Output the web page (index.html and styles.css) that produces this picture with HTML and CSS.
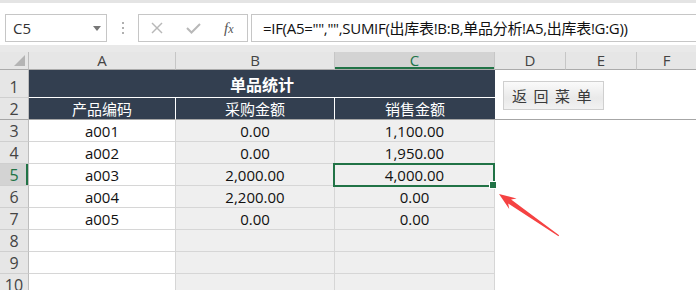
FILE: index.html
```html
<!DOCTYPE html>
<html lang="zh-CN">
<head>
    <meta charset="UTF-8">
    <title>单品统计</title>
    <link rel="stylesheet" href="styles.css">
</head>
<body>
<div class="app">
    <div class="formula-bar">
        <div class="name-box">
            <span>C5</span>
            <span class="caret"></span>
        </div>
        <div class="grip"><i></i><i></i><i></i></div>
        <div class="fx-buttons">
            <svg class="btn-cancel" viewBox="0 0 12 12" fill="none" stroke="#b8b8b8" stroke-width="1.4">
                <line x1="1" y1="1" x2="11" y2="11"></line>
                <line x1="11" y1="1" x2="1" y2="11"></line>
            </svg>
            <svg class="btn-enter" viewBox="0 0 15 11" fill="none" stroke="#b8b8b8" stroke-width="2">
                <polyline points="1,5 5.5,9.5 14,1"></polyline>
            </svg>
            <span class="btn-fx">f<small>x</small></span>
        </div>
        <div class="formula-input">=IF(A5="","",SUMIF(出库表!B:B,单品分析!A5,出库表!G:G))</div>
    </div>

    <div class="sheet">
        <div class="grid">
            <!-- column headers -->
            <div class="corner"><span class="tri"></span></div>
            <div class="ch">A</div>
            <div class="ch">B</div>
            <div class="ch active">C</div>
            <div class="ch">D</div>
            <div class="ch">E</div>
            <div class="ch last">F</div>

            <!-- row 1 -->
            <div class="rh">1</div>
            <div class="title">单品统计</div>
            <div class="blank span3"></div>

            <!-- row 2 -->
            <div class="rh thick">2</div>
            <div class="head">产品编码</div>
            <div class="head">采购金额</div>
            <div class="head end">销售金额</div>
            <div class="blank span3 thick"></div>

            <div class="rh">3</div>
            <div class="c">a001</div><div class="c fill">0.00</div><div class="c fill">1,100.00</div>
            <div class="blank span3"></div>

            <div class="rh">4</div>
            <div class="c">a002</div><div class="c fill">0.00</div><div class="c fill">1,950.00</div>
            <div class="blank span3"></div>

            <div class="rh active">5</div>
            <div class="c">a003</div><div class="c fill">2,000.00</div><div class="c fill">4,000.00</div>
            <div class="blank span3"></div>

            <div class="rh">6</div>
            <div class="c">a004</div><div class="c fill">2,200.00</div><div class="c fill">0.00</div>
            <div class="blank span3"></div>

            <div class="rh">7</div>
            <div class="c">a005</div><div class="c fill">0.00</div><div class="c fill">0.00</div>
            <div class="blank span3"></div>

            <div class="rh">8</div>
            <div class="c"></div><div class="c fill"></div><div class="c fill"></div>
            <div class="blank span3"></div>

            <div class="rh">9</div>
            <div class="c"></div><div class="c fill"></div><div class="c fill"></div>
            <div class="blank span3"></div>

            <div class="rh">10</div>
            <div class="c"></div><div class="c fill"></div><div class="c fill"></div>
            <div class="blank span3"></div>
        </div>
    </div>

    <!-- floating shapes over the sheet -->
    <button class="macro-btn">返回菜单</button>
    <div class="selection"><span class="fill-handle"></span></div>
    <svg class="arrow" viewBox="0 0 696 290">
        <polygon fill="#f54242" points="499,194 516.6,198.4 511.1,199.4 559.1,235.3 558.5,236.3 508.2,203.5 509.2,209.1"></polygon>
    </svg>
</div>
</body>
</html>
```

FILE: styles.css
```css
* {
    box-sizing: border-box;
}

body {
    margin: 0;
    font-family: "Open Sans", "Noto Sans CJK SC", sans-serif;
    color: #111;
    background-color: #fff;
    overflow: hidden;
}

.app {
    position: relative;
    width: 696px;
    height: 290px;
    overflow: hidden;
}

/* formula bar */
.formula-bar {
    height: 45px;
    border-top: 3px solid #e4e4e4;
    padding: 11px 0 0 5px;
    display: flex;
    align-items: flex-start;
}

.name-box {
    width: 102px;
    height: 28px;
    border: 1px solid #c6c6c6;
    display: flex;
    align-items: center;
    justify-content: space-between;
    padding: 0 5px 0 7px;
    font-size: 15px;
    color: #333;
}

.caret {
    width: 0;
    height: 0;
    border-left: 4px solid transparent;
    border-right: 4px solid transparent;
    border-top: 5px solid #777;
}

.grip {
    width: 31px;
    height: 28px;
    display: flex;
    flex-direction: column;
    align-items: center;
    justify-content: center;
    gap: 3px;
}

.grip i {
    width: 2px;
    height: 2px;
    background-color: #b0b0b0;
}

.fx-buttons {
    width: 110px;
    height: 28px;
    border: 1px solid #c6c6c6;
    display: flex;
    align-items: center;
    padding-left: 12px;
}

.btn-cancel {
    width: 12px;
    height: 12px;
}

.btn-enter {
    width: 15px;
    height: 11px;
    margin-left: 23px;
}

.btn-fx {
    margin-left: 23px;
    font-family: "Liberation Serif", serif;
    font-style: italic;
    font-size: 15px;
    color: #555;
}

.btn-fx small {
    font-size: 12px;
}

.formula-input {
    flex: 1;
    height: 28px;
    margin-left: 3px;
    border: 1px solid #c6c6c6;
    border-right: none;
    padding-left: 11px;
    font-size: 15px;
    letter-spacing: -0.3px;
    line-height: 26px;
    color: #111;
    white-space: nowrap;
}

/* sheet */
.sheet {
    background-color: #e9e9e9;
    padding-top: 7px;
}

.grid {
    display: grid;
    grid-template-columns: 29px 147px 159px 160px 71px 71px 59px;
    grid-template-rows: 18px 28px repeat(9, 22px);
    background-color: #fff;
}

.corner {
    background-color: #e6e6e6;
    border-right: 1px solid #bdbdbd;
    border-bottom: 1px solid #ababab;
    display: flex;
    justify-content: flex-end;
    align-items: flex-end;
    padding: 0 3px 3px 0;
}

.tri {
    width: 11px;
    height: 11px;
    background-color: #b4b4b4;
    clip-path: polygon(100% 0, 100% 100%, 0 100%);
}

.ch {
    background-color: #e6e6e6;
    border-right: 1px solid #c6c6c6;
    border-bottom: 1px solid #ababab;
    font-size: 15px;
    line-height: 17px;
    text-align: center;
    color: #444;
}

.ch.last {
    border-right: none;
}

.ch.active {
    background-color: #d3d3d3;
    color: #217346;
    box-shadow: inset 0 -2px 0 #217346;
}

.rh {
    background-color: #e6e6e6;
    border-right: 1px solid #bdbdbd;
    border-bottom: 1px solid #cfcfcf;
    display: flex;
    align-items: flex-end;
    justify-content: center;
    font-size: 16px;
    line-height: 20px;
    color: #444;
}

.rh.thick {
    border-bottom-color: #a6a6a6;
}

.rh.active {
    background-color: #d3d3d3;
    color: #217346;
    box-shadow: inset -2px 0 0 #217346;
}

.title {
    grid-column: span 3;
    background-color: #333f50;
    border-bottom: 1px solid #fff;
    color: #fff;
    font-weight: bold;
    font-size: 16px;
    display: flex;
    align-items: center;
    justify-content: center;
}

.head {
    background-color: #333f50;
    border-right: 1px solid #fff;
    border-bottom: 1px solid #a6a6a6;
    color: #fff;
    font-size: 15px;
    display: flex;
    align-items: center;
    justify-content: center;
}

.head.end {
    border-right: none;
}

.blank {
    background-color: #fff;
}

.span3 {
    grid-column: span 3;
}

.blank.thick {
    border-bottom: 1px solid #a6a6a6;
}

.c {
    border-right: 1px solid #d6d6d6;
    border-bottom: 1px solid #d6d6d6;
    font-size: 15px;
    display: flex;
    align-items: center;
    justify-content: center;
    color: #111;
}

.c.fill {
    background-color: #efefef;
}

/* overlays */
.macro-btn {
    position: absolute;
    left: 503px;
    top: 81px;
    width: 101px;
    height: 29px;
    border: 1px solid #cfcfcf;
    background: linear-gradient(to bottom, #fafafa, #e9e9e9 60%, #f2f2f2);
    font-family: "Noto Sans CJK SC", sans-serif;
    font-size: 15px;
    letter-spacing: 6.5px;
    color: #3a3a3a;
    padding: 0 0 0 8px;
    text-align: left;
}

.selection {
    position: absolute;
    left: 333px;
    top: 163px;
    width: 162px;
    height: 24px;
    border: 2px solid #217346;
}

.fill-handle {
    position: absolute;
    right: -3px;
    bottom: -3px;
    width: 6px;
    height: 6px;
    background-color: #217346;
    outline: 1px solid #fff;
}

.arrow {
    position: absolute;
    left: 0;
    top: 0;
    width: 696px;
    height: 290px;
    pointer-events: none;
}
```
